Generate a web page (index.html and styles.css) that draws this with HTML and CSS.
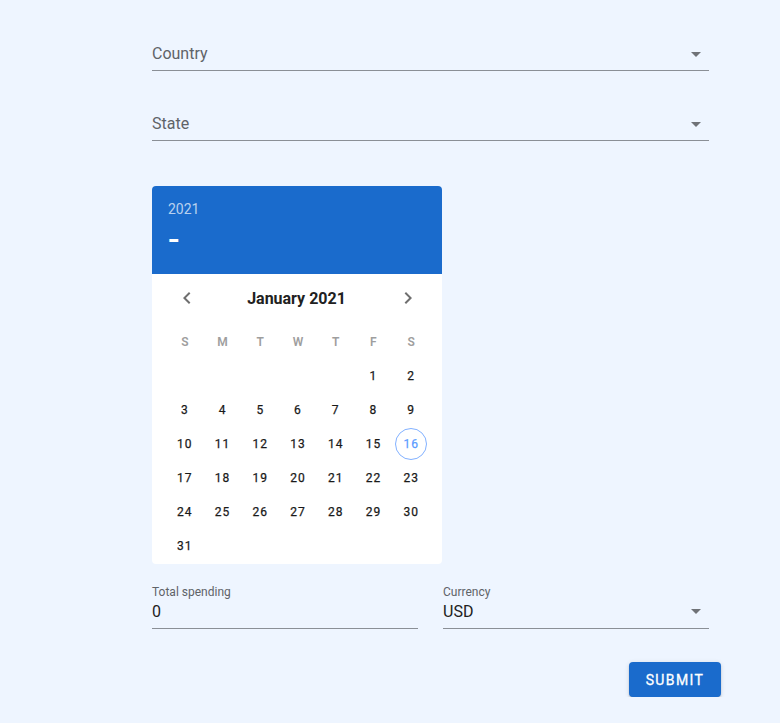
FILE: index.html
```html
<!DOCTYPE html>
<html lang="en">
<head>
<meta charset="utf-8">
<title>Form</title>
<link rel="stylesheet" href="styles.css">
</head>
<body>
<main class="form">
  <div class="select-field first">
    <span class="select-text placeholder">Country</span>
    <span class="caret"></span>
  </div>
  <div class="select-field second">
    <span class="select-text placeholder">State</span>
    <span class="caret"></span>
  </div>

  <section class="picker">
    <header class="picker-head">
      <div class="picker-year">2021</div>
      <div class="picker-title">-</div>
    </header>
    <div class="picker-body">
      <div class="month-nav">
        <button class="nav-btn" aria-label="Previous month">
          <svg width="24" height="24" viewBox="0 0 24 24"><path d="M15.41 16.58L10.83 12l4.58-4.59L14 6l-6 6 6 6z" fill="#6f6f6f"/></svg>
        </button>
        <div class="month-label">January 2021</div>
        <button class="nav-btn" aria-label="Next month">
          <svg width="24" height="24" viewBox="0 0 24 24"><path d="M8.59 16.58L13.17 12 8.59 7.41 10 6l6 6-6 6z" fill="#6f6f6f"/></svg>
        </button>
      </div>
      <div class="cal-grid">
        <span class="wd">S</span><span class="wd">M</span><span class="wd">T</span><span class="wd">W</span><span class="wd">T</span><span class="wd">F</span><span class="wd">S</span>
        <span></span><span></span><span></span><span></span><span></span><span class="d">1</span><span class="d">2</span>
        <span class="d">3</span><span class="d">4</span><span class="d">5</span><span class="d">6</span><span class="d">7</span><span class="d">8</span><span class="d">9</span>
        <span class="d">10</span><span class="d">11</span><span class="d">12</span><span class="d">13</span><span class="d">14</span><span class="d">15</span><span class="d"><span class="today">16</span></span>
        <span class="d">17</span><span class="d">18</span><span class="d">19</span><span class="d">20</span><span class="d">21</span><span class="d">22</span><span class="d">23</span>
        <span class="d">24</span><span class="d">25</span><span class="d">26</span><span class="d">27</span><span class="d">28</span><span class="d">29</span><span class="d">30</span>
        <span class="d">31</span>
      </div>
    </div>
  </section>

  <div class="pair">
    <div class="text-field">
      <label class="small-label">Total spending</label>
      <div class="value-line"><span class="value">0</span></div>
    </div>
    <div class="text-field">
      <label class="small-label">Currency</label>
      <div class="value-line"><span class="value">USD</span><span class="caret"></span></div>
    </div>
  </div>

  <div class="actions">
    <button class="submit">Submit</button>
  </div>
</main>
</body>
</html>
```

FILE: styles.css
```css
html, body {
  margin: 0;
  padding: 0;
  background: #eef5ff;
  font-family: Roboto, "Liberation Sans", sans-serif;
}

.form {
  width: 557px;
  margin-left: 152px;
  padding-top: 42px;
  position: relative;
}

.select-field {
  display: flex;
  align-items: center;
  justify-content: space-between;
  height: 24px;
  padding-bottom: 4px;
  border-bottom: 1px solid #8a8f96;
}

.select-field.second {
  margin-top: 41px;
}

.select-text {
  font-size: 16px;
  line-height: 24px;
}

.placeholder {
  color: #5f6368;
}

.caret {
  width: 0;
  height: 0;
  border-left: 5px solid transparent;
  border-right: 5px solid transparent;
  border-top: 5px solid #6f7277;
  margin-right: 8px;
}

.picker {
  margin-top: 45px;
  width: 290px;
  background: #ffffff;
  border-radius: 4px;
  overflow: hidden;
}

.picker-head {
  background: #1a6bcc;
  height: 88px;
  box-sizing: border-box;
  padding: 15px 16px 0;
}

.picker-year {
  color: rgba(255, 255, 255, 0.7);
  font-size: 14px;
  line-height: 17px;
}

.picker-title {
  color: #ffffff;
  font-size: 34px;
  font-weight: 500;
  line-height: 40px;
  margin-top: 1px;
}

.picker-body {
  padding: 0 12px 1px 14px;
}

.month-nav {
  height: 48px;
  display: flex;
  align-items: center;
  justify-content: space-between;
  padding: 0 10px 0 9px;
  margin-bottom: 3px;
}

.nav-btn {
  border: 0;
  background: none;
  padding: 0;
  width: 24px;
  height: 24px;
  display: flex;
}

.month-label {
  font-size: 16px;
  font-weight: 700;
  color: #212121;
  margin-right: 2px;
}

.cal-grid {
  display: grid;
  grid-template-columns: repeat(7, 1fr);
  grid-auto-rows: 34px;
}

.cal-grid > span {
  display: flex;
  align-items: center;
  justify-content: center;
}

.wd {
  font-size: 12px;
  font-weight: 600;
  color: #9e9e9e;
}

.d {
  font-size: 12px;
  font-weight: 400;
  color: #1a1a1a;
  letter-spacing: 1px;
  -webkit-text-stroke: 0.25px #1a1a1a;
}

.today {
  width: 30px;
  height: 30px;
  border: 1px solid #82b1ff;
  border-radius: 50%;
  color: #5c9cff;
  -webkit-text-stroke: 0.25px #5c9cff;
  display: flex;
  align-items: center;
  justify-content: center;
}

.pair {
  display: grid;
  grid-template-columns: 1fr 1fr;
  column-gap: 25px;
  margin-top: 21px;
}

.text-field {
  display: flex;
  flex-direction: column;
}

.small-label {
  font-size: 12px;
  line-height: 14px;
  color: #5f6368;
}

.value-line {
  display: flex;
  align-items: center;
  justify-content: space-between;
  height: 24px;
  padding-bottom: 5px;
  margin-top: 0;
  border-bottom: 1px solid #8a8f96;
}

.value {
  font-size: 16px;
  color: #212121;
}

.actions {
  display: flex;
  justify-content: flex-end;
  margin-top: 33px;
  margin-right: -12px;
}

.submit {
  width: 92px;
  height: 35px;
  border: 0;
  border-radius: 4px;
  background: #1a6bcc;
  color: #ffffff;
  font-family: Roboto, "Liberation Sans", sans-serif;
  font-size: 14px;
  font-weight: 400;
  -webkit-text-stroke: 0.3px #ffffff;
  letter-spacing: 1.4px;
  text-transform: uppercase;
  box-shadow: 0 3px 1px -2px rgba(0,0,0,0.2), 0 2px 2px 0 rgba(0,0,0,0.14), 0 1px 5px 0 rgba(0,0,0,0.12);
}
```
